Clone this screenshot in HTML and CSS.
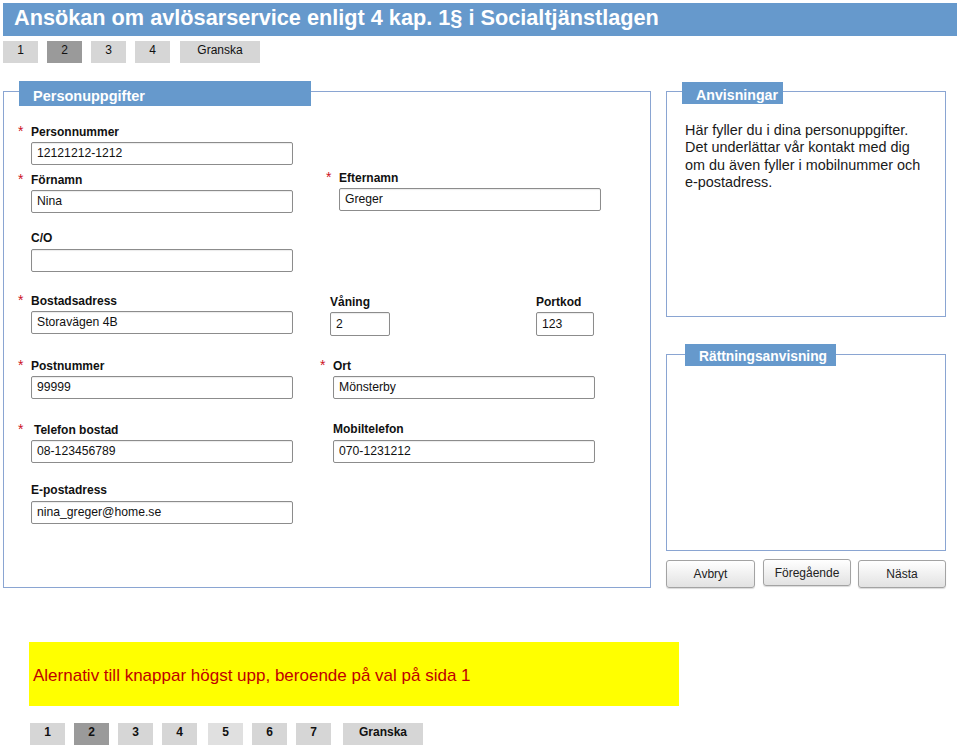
FILE: index.html
```html
<!DOCTYPE html>
<html lang="sv">
<head>
<meta charset="utf-8">
<title>Ansökan om avlösarservice</title>
<link rel="stylesheet" href="styles.css">
</head>
<body>
<h1 class="title">Ansökan om avlösarservice enligt 4 kap. 1§ i Socialtjänstlagen</h1>
<nav class="tabs top">
  <span class="tab">1</span>
  <span class="tab active">2</span>
  <span class="tab">3</span>
  <span class="tab">4</span>
  <span class="tab wide">Granska</span>
</nav>

<div class="main">
  <section class="panel person">
    <h2 class="legend">Personuppgifter</h2>
    <div class="box form">
      <div class="row">
        <div class="field w262"><div class="lbl req">Personnummer</div><div class="inp">12121212-1212</div></div>
      </div>
      <div class="row r2">
        <div class="field w262"><div class="lbl req">Förnamn</div><div class="inp">Nina</div></div>
        <div class="field w262 efter"><div class="lbl req">Efternamn</div><div class="inp">Greger</div></div>
      </div>
      <div class="row r3">
        <div class="field w262"><div class="lbl">C/O</div><div class="inp"></div></div>
      </div>
      <div class="row r4">
        <div class="field w262"><div class="lbl req">Bostadsadress</div><div class="inp">Storavägen 4B</div></div>
        <div class="field w60 vaning small"><div class="lbl">Våning</div><div class="inp tall">2</div></div>
        <div class="field w58 portkod small"><div class="lbl">Portkod</div><div class="inp tall">123</div></div>
      </div>
      <div class="row r5">
        <div class="field w262"><div class="lbl req">Postnummer</div><div class="inp">99999</div></div>
        <div class="field w262 col2"><div class="lbl req">Ort</div><div class="inp">Mönsterby</div></div>
      </div>
      <div class="row r6">
        <div class="field w262"><div class="lbl req"><span class="indent">Telefon bostad</span></div><div class="inp">08-123456789</div></div>
        <div class="field w262 col2"><div class="lbl">Mobiltelefon</div><div class="inp">070-1231212</div></div>
      </div>
      <div class="row r7">
        <div class="field w262"><div class="lbl">E-postadress</div><div class="inp">nina_greger@home.se</div></div>
      </div>
    </div>
  </section>

  <aside class="side">
    <section class="panel anv">
      <h2 class="legend">Anvisningar</h2>
      <div class="box info">Här fyller du i dina personuppgifter.<br>Det underlättar vår kontakt med dig<br>om du även fyller i mobilnummer och<br>e-postadress.</div>
    </section>
    <section class="panel ratt">
      <h2 class="legend">Rättningsanvisning</h2>
      <div class="box"></div>
    </section>
    <div class="buttons">
      <button class="btn b-avbryt">Avbryt</button>
      <button class="btn b-prev">Föregående</button>
      <button class="btn b-next">Nästa</button>
    </div>
  </aside>
</div>

<div class="note">Alernativ till knappar högst upp, beroende på val på sida 1</div>

<nav class="tabs bottom">
  <span class="tab">1</span>
  <span class="tab active">2</span>
  <span class="tab">3</span>
  <span class="tab">4</span>
  <span class="tab t5 light">5</span>
  <span class="tab">6</span>
  <span class="tab">7</span>
  <span class="tab wide">Granska</span>
</nav>
</body>
</html>
```

FILE: styles.css
```css
body {
  margin: 0;
  font-family: "Liberation Sans", Arial, sans-serif;
  color: #111;
  background: #fff;
}

.title {
  margin: 3px 3px 0;
  height: 33px;
  box-sizing: border-box;
  padding-left: 11px;
  background: #6699cc;
  color: #fff;
  font-size: 21.7px;
  font-weight: bold;
  line-height: 29px;
  white-space: nowrap;
}

/* step tabs */
.tabs {
  display: flex;
  gap: 9px;
}
.tabs.top {
  margin: 5px 0 0 3px;
}
.tabs.bottom {
  margin: 17px 0 0 30px;
}
.tab {
  width: 35px;
  height: 22px;
  box-sizing: border-box;
  background: #d6d6d6;
  color: #111;
  font-size: 12px;
  line-height: 18px;
  text-align: center;
}
.tabs.bottom .tab {
  font-weight: bold;
  line-height: 19px;
}
.tab.active {
  background: #9a9a9a;
}
.tab.light {
  background: #e0e0e0;
}
.tab.wide {
  width: 80px;
  margin-left: 1px;
}
.tabs.bottom .tab.t5 {
  margin-left: 2px;
}
.tabs.bottom .tab.wide {
  margin-left: 3px;
}

/* layout */
.main {
  display: flex;
  gap: 15px;
  margin: 18px 0 0 3px;
}
.panel {
  position: relative;
  padding-top: 10px;
}
.legend {
  position: absolute;
  top: 0;
  margin: 0;
  box-sizing: border-box;
  background: #6699cc;
  color: #fff;
  font-weight: bold;
  line-height: 16px;
  white-space: nowrap;
}
.box {
  box-sizing: border-box;
  border: 1px solid #8aa5d2;
  background: #fff;
}

/* Personuppgifter */
.person {
  width: 648px;
}
.person .legend {
  left: 16px;
  width: 292px;
  height: 25px;
  padding: 7px 0 0 14px;
  font-size: 14.5px;
}
.person .box {
  height: 497px;
  padding: 31px 0 0 27px;
}
.row {
  display: flex;
  align-items: flex-start;
}
.r2 { margin-top: 6px; }
.r3 { margin-top: 17px; }
.r4 { margin-top: 20px; }
.r5 { margin-top: 21px; }
.r6 { margin-top: 22px; }
.r7 { margin-top: 19px; }

.w262 { width: 262px; }
.w60 { width: 60px; }
.w58 { width: 58px; }
.efter {
  margin-left: 46px;
  margin-top: -2px;
}
.vaning {
  margin-left: 37px;
}
.portkod {
  margin-left: 146px;
}
.small {
  margin-top: 2px;
}
.small .lbl {
  margin-bottom: 1px;
}
.col2 {
  margin-left: 40px;
}

.lbl {
  height: 17px;
  margin-bottom: 2px;
  font-size: 12px;
  font-weight: bold;
  line-height: 17px;
  white-space: nowrap;
  color: #111;
}
.lbl .indent {
  margin-left: 3px;
}
.req::before {
  content: "*";
  display: inline-block;
  width: 13px;
  margin-left: -13px;
  color: #cc1122;
  font-size: 14px;
  font-weight: normal;
}
.inp {
  height: 23px;
  box-sizing: border-box;
  padding: 0 5px;
  border: 1px solid #8c8c8c;
  border-radius: 2px;
  background: #fff;
  box-shadow: inset 0 1px 1px rgba(0, 0, 0, 0.08);
  font-size: 12.2px;
  line-height: 21px;
  white-space: nowrap;
  color: #111;
}
.inp.tall {
  height: 24px;
  line-height: 22px;
}

/* side column */
.side {
  width: 280px;
  display: flex;
  flex-direction: column;
}
.anv .legend {
  top: 1px;
  left: 16px;
  width: 101px;
  height: 22px;
  padding: 5px 0 0 14px;
  font-size: 14.2px;
}
.anv .box {
  height: 226px;
  padding: 30px 8px 0 18px;
  font-size: 14.4px;
  line-height: 17.3px;
  color: #1a1a1a;
}
.ratt {
  margin-top: 27px;
}
.ratt .legend {
  left: 19px;
  width: 151px;
  height: 22px;
  padding: 5px 0 0 14px;
  font-size: 13.8px;
}
.ratt .box {
  height: 197px;
}
.buttons {
  display: flex;
  align-items: flex-start;
  gap: 7px;
  margin-top: 9px;
}
.btn {
  height: 28px;
  padding: 0;
  box-sizing: border-box;
  border: 1px solid #a3a3a3;
  border-radius: 3px;
  background: linear-gradient(#ffffff, #e2e2e2);
  box-shadow: 0 1px 1px rgba(0, 0, 0, 0.15);
  font-family: "Liberation Sans", Arial, sans-serif;
  font-size: 12px;
  line-height: 26px;
  color: #222;
}
.b-avbryt { width: 89px; }
.b-prev {
  width: 88px;
  margin-left: 1px;
  margin-top: -1px;
  height: 27px;
  line-height: 22px;
}
.b-next { width: 88px; }

/* note */
.note {
  margin: 54px 0 0 29px;
  width: 650px;
  height: 64px;
  box-sizing: border-box;
  padding: 4px 0 0 4px;
  display: flex;
  align-items: center;
  background: #ffff00;
  color: #c00000;
  font-size: 17px;
}
```
